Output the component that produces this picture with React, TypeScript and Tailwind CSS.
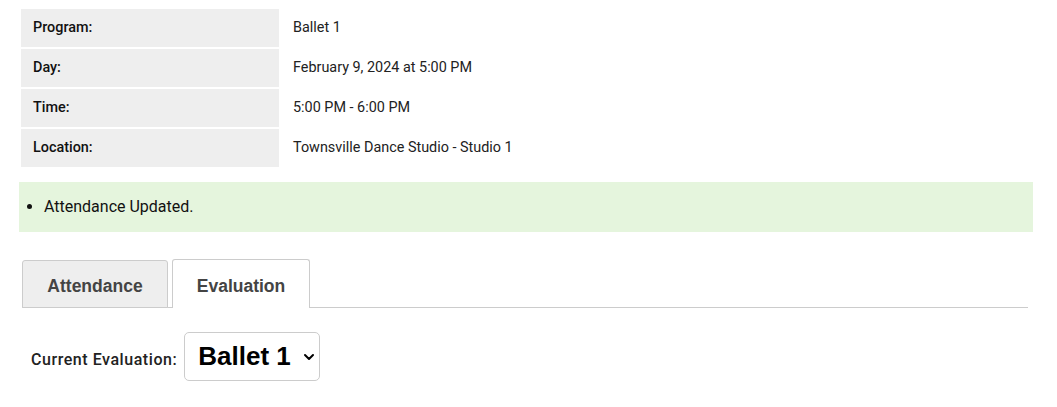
import { ChevronDown } from "lucide-react";

const rows = [
  { label: "Program:", value: "Ballet 1" },
  { label: "Day:", value: "February 9, 2024 at 5:00 PM" },
  { label: "Time:", value: "5:00 PM - 6:00 PM" },
  { label: "Location:", value: "Townsville Dance Studio - Studio 1" },
];

export default function App() {
  return (
    <div className="w-[1057px] h-[407px] bg-white font-['Roboto',sans-serif] text-[#222]">
      <div className="pt-[9px] pl-[21px] grid grid-cols-[258px_1fr] gap-y-[2px] w-[760px]">
        {rows.map((r) => (
          <div key={r.label} className="contents">
            <div className="bg-[#eeeeee] h-[38px] flex items-center pl-3 text-[14.4px] font-medium text-[#111]">
              {r.label}
            </div>
            <div className="h-[38px] flex items-center pl-[14px] text-[14.4px] text-[#222]">
              {r.value}
            </div>
          </div>
        ))}
      </div>

      <div className="mt-[15px] mx-[19px] w-[1014px] h-[50px] bg-[#e5f5dd] flex items-center pl-[7px]">
        <ul className="list-disc pl-[18px] text-[16px] text-[#111]">
          <li>Attendance Updated.</li>
        </ul>
      </div>

      <div className="mt-[28px] ml-[22px] w-[1006px] flex items-end border-b border-[#cccccc] h-[48px] font-['Liberation_Sans',Arial,sans-serif]">
        <div className="w-[146px] h-[48px] -mb-px bg-[#eeeeee] border border-[#cccccc] rounded-t-[3px] flex items-center justify-center text-[17.5px] font-bold text-[#444] pt-[5px]">
          Attendance
        </div>
        <div className="ml-[4px] w-[138px] h-[49px] -mb-px bg-white border border-b-0 border-[#cccccc] rounded-t-[3px] flex items-center justify-center text-[17.5px] font-bold text-[#444] pt-[4px]">
          Evaluation
        </div>
      </div>

      <div className="mt-[24px] ml-[31px] flex items-center gap-[7px]">
        <span className="text-[16px] tracking-[0.55px] font-medium text-[#222] pt-[7px]">Current Evaluation:</span>
        <div className="w-[136px] h-[49px] border border-[#cccccc] rounded-[5px] flex items-center pl-[13px] font-['Liberation_Sans',Arial,sans-serif]">
          <span className="text-[26px] font-bold text-black">Ballet 1</span>
          <ChevronDown className="ml-[10px] w-[16px] h-[16px] text-black" strokeWidth={3} />
        </div>
      </div>
    </div>
  );
}
